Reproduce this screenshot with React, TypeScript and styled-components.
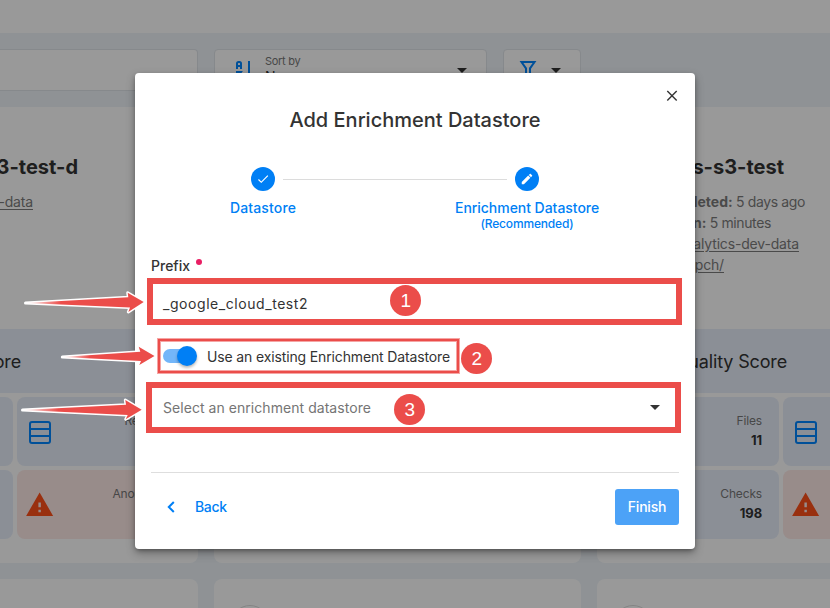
import React from "react";
import styled, { createGlobalStyle } from "styled-components";

const BLUE = "#007ff5";
const RED = "#eb4d4a";

const Global = createGlobalStyle`
  * { box-sizing: border-box; }
  html, body { margin: 0; padding: 0; }
  body { font-family: Inter, "Liberation Sans", sans-serif; font-size: 14px; color: #333; overflow: hidden; }
`;

const Screen = styled.div`
  position: relative;
  width: 830px;
  height: 608px;
  overflow: hidden;
  background: #eef4f9;
`;

/* ---------- page behind the dialog ---------- */
const Page = styled.div`
  display: flex;
  flex-direction: column;
  width: 830px;
  height: 608px;
  overflow: hidden;
`;
const TopBar = styled.header`
  flex: none;
  height: 33px;
  background: #fff;
`;
const Toolbar = styled.div`
  flex: none;
  display: flex;
  gap: 16px;
  height: 74px;
  padding-top: 16px;
`;
const Control = styled.div<{ $w: number; $open?: boolean }>`
  flex: none;
  display: flex;
  width: ${(p) => p.$w}px;
  height: 42px;
  border: 1px solid #dfe4e9;
  border-left-width: ${(p) => (p.$open ? 0 : 1)}px;
  border-radius: ${(p) => (p.$open ? "0 4px 4px 0" : "4px")};
  background: #fff;
`;
const SortIcon = styled.svg`
  flex: none;
  margin: 8px 12px 0 18px;
`;
const SortText = styled.div`
  flex: 1;
  padding-top: 4px;
`;
const SortCaption = styled.div`
  font-size: 11px;
  line-height: 14px;
  letter-spacing: -0.3px;
  color: #777;
`;
const SortValue = styled.div`
  line-height: 17px;
`;
const CaretIcon = styled.svg<{ $m: string }>`
  flex: none;
  margin: ${(p) => p.$m};
`;
const FunnelIcon = styled.svg`
  flex: none;
  margin: 8px 0 0 12px;
`;
const Cards = styled.div`
  flex: none;
  display: grid;
  grid-template-columns: repeat(3, 367px);
  grid-template-rows: 456px 200px;
  gap: 16px;
  margin-left: -169px;
`;
const Card = styled.section<{ $first?: boolean }>`
  display: flex;
  flex-direction: column;
  overflow: hidden;
  border-radius: ${(p) => (p.$first ? "0 0 8px 8px" : "8px")};
  background: #fff;
`;
const CardHead = styled.div`
  height: 222px;
  padding-top: 46px;
`;
const CardTitle = styled.div<{ $end: number }>`
  width: ${(p) => p.$end}px;
  margin-bottom: 10px;
  font-size: 20px;
  font-weight: 700;
  line-height: 28px;
  letter-spacing: 0;
  text-align: right;
  white-space: nowrap;
`;
const Meta = styled.div<{ $end: number; $link?: boolean }>`
  width: ${(p) => p.$end}px;
  line-height: 21px;
  letter-spacing: ${(p) => (p.$link ? -0.17 : -0.37)}px;
  text-align: right;
  white-space: nowrap;
  color: #7c7c7c;
  text-decoration: ${(p) => (p.$link ? "underline" : "none")};
  text-underline-offset: 2px;
  b { letter-spacing: 0; }
`;
const Score = styled.div`
  display: flex;
  align-items: center;
  justify-content: flex-end;
  height: 64px;
  padding: 1px 177px 0 0;
  font-size: 18px;
  letter-spacing: -0.15px;
  background: #e8effb;
`;
const Tiles = styled.div`
  display: grid;
  grid-template-columns: 178px 178px;
  grid-auto-rows: 69px;
  gap: 4px;
  padding: 4px;
`;
const Tile = styled.div<{ $alert?: boolean }>`
  display: flex;
  justify-content: space-between;
  align-items: center;
  padding: 0 17px 0 9px;
  border-radius: 8px;
  background: ${(p) => (p.$alert ? "#fde9e7" : "#e8effb")};
`;
const TileText = styled.div<{ $inset: number }>`
  padding: 0 ${(p) => p.$inset}px 3px 0;
  text-align: right;
`;
const TileLabel = styled.div`
  font-size: 12px;
  line-height: 20px;
  letter-spacing: -0.15px;
  color: #777;
`;
const TileValue = styled.div`
  font-size: 13px;
  font-weight: 700;
  line-height: 19px;
  letter-spacing: -0.1px;
`;
const Gauge = styled.div`
  width: 38px;
  height: 38px;
  margin: 26px 0 0 17px;
  border: 1px solid #dcdcdc;
  border-radius: 50%;
`;
const Scrim = styled.div`
  position: absolute;
  inset: 0;
  display: flex;
  align-items: flex-start;
  justify-content: center;
  padding-top: 73px;
  background: rgba(0, 0, 0, 0.4);
`;

/* ---------- dialog ---------- */
const Dialog = styled.div`
  display: flex;
  flex-direction: column;
  width: 560px;
  height: 476px;
  padding: 0 16px;
  border-radius: 4px;
  background: #fff;
  box-shadow: 0 2px 4px -1px rgba(0, 0, 0, 0.35), 0 4px 10px rgba(0, 0, 0, 0.3);
`;
const CloseRow = styled.div`
  display: flex;
  justify-content: flex-end;
  height: 33px;
  padding: 17px 1px 0 0;
`;
const Title = styled.h1`
  margin: 0;
  font-size: 20px;
  font-weight: 500;
  line-height: 28px;
  text-align: center;
`;
const StepTrack = styled.div`
  display: flex;
  align-items: center;
  gap: 8px;
  margin: 33px 140px 0 100px;
`;
const StepDot = styled.div`
  display: flex;
  align-items: center;
  justify-content: center;
  width: 24px;
  height: 24px;
  border-radius: 50%;
  background: ${BLUE};
`;
const StepLine = styled.div`
  flex: 1;
  height: 1px;
  background: #dcdcdc;
`;
const StepLabels = styled.div`
  display: flex;
  justify-content: space-between;
  height: 57px;
  margin: 8px 80px 0 40px;
  color: ${BLUE};
  font-weight: 500;
  text-align: center;
`;
const StepLabel = styled.div<{ $ls: number }>`
  width: 144px;
  line-height: 18px;
  letter-spacing: ${(p) => p.$ls}px;
  white-space: nowrap;
`;
const StepHint = styled.div`
  font-size: 12px;
  line-height: 14px;
  letter-spacing: -0.17px;
`;
const FieldLabel = styled.label`
  display: flex;
  gap: 6px;
  height: 20px;
  font-weight: 500;
  line-height: 20px;
`;
const Required = styled.span`
  width: 6px;
  height: 6px;
  margin-top: 3px;
  border-radius: 50%;
  background: #e91e63;
`;
const Field = styled.div<{ $ls: number; $tone: string; $mt: number }>`
  display: flex;
  align-items: center;
  justify-content: space-between;
  height: 40px;
  margin-top: ${(p) => p.$mt}px;
  padding: 0 18px 0 12px;
  letter-spacing: ${(p) => p.$ls}px;
  color: ${(p) => p.$tone};
`;
const ToggleRow = styled.div`
  display: flex;
  align-items: center;
  height: 24px;
  margin-top: 21px;
  padding-left: 12px;
  letter-spacing: -0.14px;
`;
const Track = styled.div`
  display: flex;
  align-items: center;
  justify-content: flex-end;
  width: 30px;
  height: 14px;
  margin-right: 14px;
  border-radius: 7px;
  background: #73b6f9;
`;
const Thumb = styled.div`
  flex: none;
  width: 20px;
  height: 20px;
  margin-right: -4px;
  border-radius: 50%;
  background: ${BLUE};
  box-shadow: 0 2px 3px rgba(0, 0, 0, 0.28);
`;
const Footer = styled.div`
  display: flex;
  align-items: center;
  justify-content: space-between;
  margin-top: 45px;
  padding-top: 16px;
  border-top: 1px solid #dedede;
`;
const BackButton = styled.button`
  display: flex;
  align-items: center;
  gap: 20px;
  padding: 0 0 1px 16px;
  border: 0;
  background: none;
  color: ${BLUE};
  font: 500 14px Inter, sans-serif;
  letter-spacing: -0.35px;
`;
const FinishButton = styled.button`
  width: 64px;
  height: 36px;
  padding: 0 0 1px;
  border: 0;
  border-radius: 3px;
  background: #4ca2f7;
  color: #fff;
  font: 500 14px Inter, sans-serif;
  letter-spacing: -0.2px;
`;

/* ---------- annotations over the dialog ---------- */
const Frame = styled.div<{ $x: number; $y: number; $w: number; $h: number; $thin?: boolean }>`
  position: absolute;
  left: ${(p) => p.$x}px;
  top: ${(p) => p.$y}px;
  width: ${(p) => p.$w}px;
  height: ${(p) => p.$h}px;
  border: ${(p) => (p.$thin ? 2 : 6)}px solid ${RED};
  box-shadow: ${(p) => (p.$thin ? "0 0 0 1px #f5a5a4, inset 0 0 0 1px #f5a5a4" : "none")};
`;
const Badge = styled.div<{ $x: number; $y: number }>`
  position: absolute;
  left: ${(p) => p.$x}px;
  top: ${(p) => p.$y}px;
  width: 31px;
  height: 31px;
  border-radius: 50%;
  background: ${RED};
  color: #fff;
  font: 19px/31px "Liberation Sans", sans-serif;
  text-align: center;
`;
const Arrows = styled.svg`
  position: absolute;
  left: 0;
  top: 0;
`;

const Caret = ({ m }: { m: string }) => (
  <CaretIcon $m={m} width="10" height="5" viewBox="0 0 10 5">
    <path d="M0 0h10L5 5z" fill="#333" />
  </CaretIcon>
);

const TableIcon = () => (
  <svg width="28" height="28" viewBox="0 0 28 28" fill="none" stroke="#0085ff" strokeWidth="2">
    <rect x="4" y="4" width="20" height="21" rx="2" />
    <path d="M4 11h20M4 18h20" />
  </svg>
);

const AlertIcon = () => (
  <svg width="28" height="28" viewBox="0.9 0.7 22.800 22.800">
    <path d="M13,14H11V10H13M13,18H11V16H13M1,21H23L12,2L1,21Z" fill="#ff5019" />
  </svg>
);

interface TileData { label: string; value: string; icon: "table" | "alert" | "none" }
interface CardData {
  title: string;
  titleEnd: number;
  meta: { label?: string; text: string; end: number; link?: boolean }[];
  tiles: TileData[];
  inset: number;
}

const left: CardData = {
  title: "aws-s3-test-d",
  titleEnd: 247,
  meta: [{ text: "analytics-dev-data", end: 202, link: true }],
  inset: 8,
  tiles: [
    { label: "Files", value: "11", icon: "none" },
    { label: "Records", value: "9M", icon: "table" },
    { label: "Checks", value: "198", icon: "none" },
    { label: "Anomalies", value: "31", icon: "alert" },
  ],
};
const right: CardData = {
  title: "aws-s3-test",
  titleEnd: 187,
  meta: [
    { label: "Completed:", text: "5 days ago", end: 208 },
    { label: "In:", text: "5 minutes", end: 174 },
    { text: "analytics-dev-data", end: 202, link: true },
    { text: "/tpch/", end: 127, link: true },
  ],
  inset: 0,
  tiles: [
    { label: "Files", value: "11", icon: "none" },
    { label: "", value: "", icon: "table" },
    { label: "Checks", value: "198", icon: "none" },
    { label: "", value: "", icon: "alert" },
  ],
};

const StoreCard = ({ data }: { data: CardData }) => (
  <Card $first>
    <CardHead>
      <CardTitle $end={data.titleEnd}>{data.title}</CardTitle>
      {data.meta.map((m) => (
        <Meta key={m.text} $end={m.end} $link={m.link}>
          {m.label && <b>{m.label} </b>}
          {m.text}
        </Meta>
      ))}
    </CardHead>
    <Score>Quality Score</Score>
    <Tiles>
      {data.tiles.map((t, i) => (
        <Tile key={i} $alert={t.icon === "alert"}>
          {t.icon === "table" ? <TableIcon /> : t.icon === "alert" ? <AlertIcon /> : <span />}
          <TileText $inset={data.inset}>
            <TileLabel>{t.label}</TileLabel>
            <TileValue>{t.value}</TileValue>
          </TileText>
        </Tile>
      ))}
    </Tiles>
  </Card>
);

const arrowShapes = [
  "M25.5 303 L128.3 297.2 L127.7 292.7 L143.7 302 L128.3 312 L130 307.5 Z",
  "M62.3 357 L140.3 351.7 L138.7 346.7 L154.5 356 L139.3 365 L141 361 Z",
  "M22.5 410 L126 404.7 L125.3 400 L141.7 409.7 L125.7 419.3 L127.7 415 Z",
];

export default function App() {
  return (
    <Screen>
      <Global />
      <Page>
        <TopBar />
        <Toolbar>
          <Control $w={198} $open />
          <Control $w={273}>
            <SortIcon width="20" height="24" viewBox="0 0 20 24" fill="none" stroke="#0085ff" strokeWidth="2">
              <path d="M4 11V5.500q0-1.500 1.500-1.500h1q1.500 0 1.500 1.500V11M4 8h4" />
              <path d="M3 14h5l-4 6h5M16 3v17" />
            </SortIcon>
            <SortText>
              <SortCaption>Sort by</SortCaption>
              <SortValue>Name</SortValue>
            </SortText>
            <Caret m="18px 19px 0 0" />
          </Control>
          <Control $w={78}>
            <FunnelIcon width="24" height="24" viewBox="0 0 24 24">
              <path d="M5.500 4h13l-4.500 6.400V20l-4-4v-5.600z" fill="none" stroke="#0085ff" strokeWidth="2" />
            </FunnelIcon>
            <Caret m="18px 0 0 11px" />
          </Control>
        </Toolbar>
        <Cards>
          <StoreCard data={left} />
          <Card $first />
          <StoreCard data={right} />
          <Card />
          <Card><Gauge /></Card>
          <Card><Gauge /></Card>
        </Cards>
      </Page>

      <Scrim>
        <Dialog>
          <CloseRow>
            <svg width="12" height="12" viewBox="0 0 12 12">
              <path d="M1.300 1l9.400 9.400M10.700 1l-9.400 9.400" stroke="#333" strokeWidth="1.400" />
            </svg>
          </CloseRow>
          <Title>Add Enrichment Datastore</Title>
          <StepTrack>
            <StepDot>
              <svg width="14" height="14" viewBox="0 0 24 24">
                <path d="M21,7L9,19L3.500,13.500L4.910,12.090L9,16.170L19.590,5.590L21,7Z" fill="#fff" />
              </svg>
            </StepDot>
            <StepLine />
            <StepDot>
              <svg width="14" height="14" viewBox="0 0 24 24">
                <path
                  d="M20.710,7.040C21.100,6.650 21.100,6 20.710,5.630L18.370,3.290C18,2.900 17.350,2.900 16.960,3.290L15.120,5.120L18.870,8.870M3,17.250V21H6.750L17.810,9.930L14.060,6.180L3,17.250Z"
                  fill="#fff"
                />
              </svg>
            </StepDot>
          </StepTrack>
          <StepLabels>
            <StepLabel $ls={0.15}>Datastore</StepLabel>
            <StepLabel $ls={-0.04}>
              Enrichment Datastore
              <StepHint>(Recommended)</StepHint>
            </StepLabel>
          </StepLabels>
          <FieldLabel>
            Prefix
            <Required />
          </FieldLabel>
          <Field $ls={0.56} $tone="#333" $mt={7}>_google_cloud_test2</Field>
          <ToggleRow>
            <Track><Thumb /></Track>
            Use an existing Enrichment Datastore
          </ToggleRow>
          <Field $ls={0.05} $tone="#757575" $mt={19}>
            Select an enrichment datastore
            <Caret m="1px 1px 0 0" />
          </Field>
          <Footer>
            <BackButton>
              <svg width="8" height="12" viewBox="0 0 8 12">
                <path d="M6.800 1L1.800 6l5 5" fill="none" stroke={BLUE} strokeWidth="2" />
              </svg>
              Back
            </BackButton>
            <FinishButton>Finish</FinishButton>
          </Footer>
        </Dialog>
      </Scrim>

      <Frame $x={147} $y={278} $w={535} $h={47} />
      <Frame $x={158} $y={339} $w={301} $h={34} $thin />
      <Frame $x={146} $y={382} $w={535} $h={51} />
      <Badge $x={390.4} $y={285.4}>1</Badge>
      <Badge $x={461.4} $y={342.5}>2</Badge>
      <Badge $x={394.4} $y={393.5}>3</Badge>
      <Arrows width="160" height="430" viewBox="0 0 160 430">
        <defs>
          <linearGradient id="tail" x1="0" x2="1" y1="0" y2="0">
            <stop offset="0" stopColor="#fff" />
            <stop offset="0.3" stopColor={RED} />
          </linearGradient>
        </defs>
        {arrowShapes.map((d) => (
          <path key={d} d={d} fill="url(#tail)" stroke="#fff" strokeWidth="3" strokeLinejoin="round" paintOrder="stroke" />
        ))}
      </Arrows>
    </Screen>
  );
}
